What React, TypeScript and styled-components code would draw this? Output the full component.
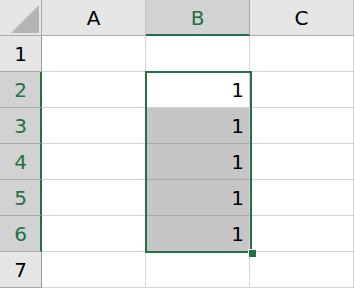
import React from 'react';
import styled, { createGlobalStyle } from 'styled-components';

const GREEN = '#217346';

const columns = ['A', 'B', 'C'];
const rows = [1, 2, 3, 4, 5, 6, 7];

// selected range B2:B6, active cell B2
const inSelection = (col: string, row: number) => col === 'B' && row >= 2 && row <= 6;
const isActive = (col: string, row: number) => col === 'B' && row === 2;

const App: React.FC = () => {
  return (
    <>
      <GlobalStyle />
      <Sheet>
        <Corner>
          <svg width="42" height="36" viewBox="0 0 42 36">
            <polygon points="39,5 39,33 11,33" fill="#b4b4b4" />
          </svg>
        </Corner>
        {columns.map(col => (
          <ColHeader key={col} selected={col === 'B'}>{col}</ColHeader>
        ))}
        {rows.map(row => (
          <React.Fragment key={row}>
            <RowHeader selected={row >= 2 && row <= 6}>{row}</RowHeader>
            {columns.map(col => (
              <Cell
                key={col}
                shaded={inSelection(col, row) && !isActive(col, row)}
              >
                {inSelection(col, row) ? 1 : ''}
              </Cell>
            ))}
          </React.Fragment>
        ))}
        <SelectionBox>
          <FillHandle />
        </SelectionBox>
      </Sheet>
    </>
  );
};

const GlobalStyle = createGlobalStyle`
  html, body {
    margin: 0;
    padding: 0;
    background: #ffffff;
  }
  body {
    font-family: "DejaVu Sans", "Noto Sans CJK JP", sans-serif;
  }
`;

const Sheet = styled.div`
  position: relative;
  display: grid;
  grid-template-columns: 42px repeat(3, 104px);
  grid-template-rows: repeat(8, 36px);
  width: 355px;
  height: 289px;
  overflow: hidden;
  background: #ffffff;
`;

const Corner = styled.div`
  background: #e6e6e6;
  border-right: 1px solid #ababab;
  border-bottom: 1px solid #ababab;
  svg {
    display: block;
  }
`;

const ColHeader = styled.div<{ selected?: boolean }>`
  display: flex;
  align-items: center;
  justify-content: center;
  background: ${p => (p.selected ? '#d2d2d2' : '#e6e6e6')};
  border-right: 1px solid ${p => (p.selected ? '#ababab' : '#c8c8c8')};
  border-bottom: ${p => (p.selected ? `2px solid ${GREEN}` : '1px solid #ababab')};
  color: ${p => (p.selected ? GREEN : '#000000')};
  font-size: 20px;
  box-sizing: border-box;
  padding-top: ${p => (p.selected ? '1px' : '0')};
  &:last-of-type {
    border-right: 1px solid #9b9b9b;
  }
`;

const RowHeader = styled.div<{ selected?: boolean }>`
  display: flex;
  align-items: center;
  justify-content: center;
  background: ${p => (p.selected ? '#d2d2d2' : '#e6e6e6')};
  border-right: ${p => (p.selected ? `2px solid ${GREEN}` : '1px solid #9b9b9b')};
  border-bottom: 1px solid #ababab;
  color: ${p => (p.selected ? GREEN : '#000000')};
  font-size: 20px;
  box-sizing: border-box;
  padding-left: ${p => (p.selected ? '1px' : '0')};
`;

const Cell = styled.div<{ shaded?: boolean }>`
  display: flex;
  align-items: center;
  justify-content: flex-end;
  padding-right: 5px;
  background: ${p => (p.shaded ? '#c6c6c6' : '#ffffff')};
  border-right: 1px solid #d4d4d4;
  border-bottom: 1px solid ${p => (p.shaded ? '#ababab' : '#d4d4d4')};
  color: #000000;
  font-size: 20px;
`;

const SelectionBox = styled.div`
  position: absolute;
  left: 145px;
  top: 71px;
  width: 107px;
  height: 182px;
  box-sizing: border-box;
  border: 2px solid ${GREEN};
  pointer-events: none;
`;

const FillHandle = styled.div`
  position: absolute;
  right: -6px;
  bottom: -6px;
  width: 7px;
  height: 7px;
  background: ${GREEN};
  border-top: 1px solid #ffffff;
  border-left: 1px solid #ffffff;
`;

export default App;
